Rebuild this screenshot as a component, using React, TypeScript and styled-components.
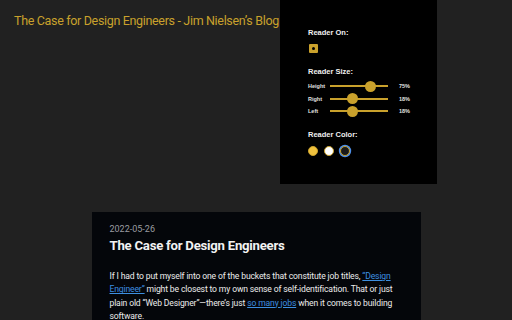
import React from "react";
import styled, { createGlobalStyle } from "styled-components";

const Global = createGlobalStyle`
  html, body { margin: 0; padding: 0; background: #212121; }
  body { width: 512px; height: 320px; overflow: hidden; font-family: Roboto, "Liberation Sans", Arial, sans-serif; }
`;

const Page = styled.div`
  position: relative;
  width: 512px;
  height: 320px;
  display: flex;
  flex-direction: column;
  align-items: center;
`;

const SiteTitle = styled.h1`
  align-self: flex-start;
  margin: 13px 0 0 14px;
  font-size: 12.5px;
  letter-spacing: -0.33px;
  font-weight: 400;
  color: #c9a12c;
  line-height: 16px;
  white-space: nowrap;
`;

const Card = styled.article`
  margin-top: 183px;
  width: 293px;
  padding: 12px 18px 0 18px;
  background: #04060a;
  flex: 1;
  color: #e8e8e8;
`;

const DateLine = styled.div`
  font-size: 9px;
  color: #9a9ca0;
  line-height: 11px;
`;

const Heading = styled.h2`
  margin: 2px 0 0 0;
  font-size: 13.2px;
  letter-spacing: -0.25px;
  font-weight: 700;
  color: #f2f2f2;
  line-height: 17px;
`;

const Para = styled.p`
  margin: 16px 0 0 0;
  font-size: 8.6px;
  letter-spacing: -0.15px;
  line-height: 13.3px;
  color: #ececec;
`;

const Link = styled.a`
  color: #3d8fe0;
  text-decoration: underline;
`;

const Panel = styled.div`
  position: absolute;
  top: 0;
  left: 280px;
  width: 157px;
  height: 184px;
  background: #000;
  box-sizing: border-box;
  padding: 28px 0 0 28px;
  display: flex;
  flex-direction: column;
  font-family: "Liberation Sans", Arial, sans-serif;
`;

const Label = styled.div`
  font-size: 7.5px;
  font-weight: 700;
  color: #f0f0f0;
  line-height: 9px;
`;

const Section = styled.div<{ $gap?: number }>`
  display: flex;
  flex-direction: column;
  margin-bottom: ${(p) => p.$gap ?? 10}px;
`;

const Check = styled.div`
  margin-top: 7px;
  margin-left: 1px;
  width: 9px;
  height: 9px;
  background: #c9a12c;
  border-radius: 1px;
  display: flex;
  align-items: center;
  justify-content: center;
  &::after {
    content: "";
    width: 3px;
    height: 3px;
    border-radius: 50%;
    background: #000;
  }
`;

const SliderRow = styled.div`
  display: grid;
  grid-template-columns: 22px 58px 22px;
  align-items: center;
  height: 12.5px;
`;

const SliderName = styled.span`
  font-size: 5.5px;
  color: #e0e0e0;
  font-weight: 700;
`;

const Track = styled.div`
  position: relative;
  height: 2px;
  background: #c9a12c;
`;

const Thumb = styled.div`
  position: absolute;
  top: -4.5px;
  width: 11px;
  height: 11px;
  margin-left: -5.5px;
  border-radius: 50%;
  background: #c9a12c;
`;

const Pct = styled.span`
  font-size: 5.5px;
  color: #e0e0e0;
  font-weight: 700;
  text-align: right;
`;

const Swatches = styled.div`
  margin-top: 7px;
  display: flex;
  gap: 6px;
`;

const Swatch = styled.div<{ $bg: string; $selected?: boolean }>`
  width: 10px;
  height: 10px;
  border-radius: 50%;
  background: ${(p) => p.$bg};
  box-sizing: border-box;
  border: 1px solid #c9a12c;
  box-shadow: ${(p) => (p.$selected ? "0 0 0 1.2px #4d8fe8" : "none")};
`;

const sliders = [
  { name: "Height", pos: 0.70, pct: "75%" },
  { name: "Right", pos: 0.38, pct: "18%" },
  { name: "Left", pos: 0.38, pct: "18%" },
];

export default function App() {
  return (
    <>
      <Global />
      <Page>
        <SiteTitle>The Case for Design Engineers - Jim Nielsen’s Blog</SiteTitle>
        <Card>
          <DateLine>2022-05-26</DateLine>
          <Heading>The Case for Design Engineers</Heading>
          <Para>
            If I had to put myself into one of the buckets that constitute job titles,{" "}
            <Link>“Design Engineer”</Link> might be closest to my own sense of self-identification. That or just
            plain old “Web Designer”—there’s just <Link>so many jobs</Link> when it comes to building
            software.
          </Para>
        </Card>
        <Panel>
          <Section $gap={14}>
            <Label>Reader On:</Label>
            <Check />
          </Section>
          <Section $gap={12}>
            <Label>Reader Size:</Label>
            <div style={{ height: 4 }} />
            {sliders.map((s) => (
              <SliderRow key={s.name}>
                <SliderName>{s.name}</SliderName>
                <Track>
                  <Thumb style={{ left: `${s.pos * 100}%` }} />
                </Track>
                <Pct>{s.pct}</Pct>
              </SliderRow>
            ))}
          </Section>
          <Section>
            <Label>Reader Color:</Label>
            <Swatches>
              <Swatch $bg="#f0c23e" />
              <Swatch $bg="#ffffff" />
              <Swatch $bg="#1a1a1a" $selected />
            </Swatches>
          </Section>
        </Panel>
      </Page>
    </>
  );
}
